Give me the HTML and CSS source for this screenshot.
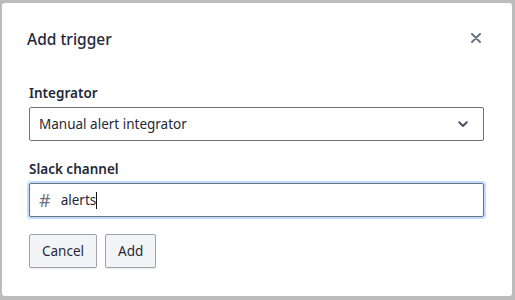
FILE: index.html
```html
<!DOCTYPE html>
<html>
	<head>
		<meta charset="UTF-8">
		<title>Add trigger</title>
		<link rel="stylesheet" href="styles.css">
	</head>
	<body>
		<div class="dialog">
			<div class="dlg-head">
				<h2 class="dlg-title">Add trigger</h2>
				<span class="dlg-close">
					<svg width="10" height="10" viewBox="0 0 10 10"><path d="M1 1L9 9M9 1L1 9" stroke="#6b7489" stroke-width="2" stroke-linecap="round"/></svg>
				</span>
			</div>
			<div class="field">
				<label class="field-label">Integrator</label>
				<div class="select">
					<span>Manual alert integrator</span>
					<svg width="10" height="7" viewBox="0 0 10 7"><path d="M1.2 1.3L5 5L8.8 1.3" fill="none" stroke="#4b5563" stroke-width="2" stroke-linecap="round" stroke-linejoin="round"/></svg>
				</div>
			</div>
			<div class="field">
				<label class="field-label">Slack channel</label>
				<div class="input focus">
					<span class="hash">#</span>
					<span class="val">alerts</span><span class="caret"></span>
				</div>
			</div>
			<div class="actions">
				<button class="btn">Cancel</button>
				<button class="btn">Add</button>
			</div>
		</div>
	</body>
</html>
```

FILE: styles.css
```css
*{margin:0;padding:0;box-sizing:border-box;}
html,body{height:100%;}
body{background:#bcbcbc;font-family:"Noto Sans","Open Sans",sans-serif;color:#1f2937;padding:3px 3px 4px 2px;}
.dialog{background:#fff;height:293px;width:510px;border-radius:3px;padding:0 28px 0 27px;}
.dlg-head{display:flex;align-items:center;justify-content:space-between;height:80px;}
.dlg-title{font-size:15.5px;font-weight:500;color:#1f2a3a;margin-left:-2px;margin-top:-8px;}
.dlg-close{display:flex;margin-right:3px;margin-top:-11px;}
.field{display:flex;flex-direction:column;margin-bottom:18px;}
.field-label{font-size:13.5px;font-weight:600;color:#1f2937;line-height:20px;margin-bottom:4px;}
.select,.input{height:34px;border:1px solid #6b7280;border-radius:2px;display:flex;align-items:center;font-size:13.5px;color:#1f2937;}
.select{justify-content:space-between;padding:0 15px 0 9px;}
.input{padding:0 9px;}
.input.focus{box-shadow:0 0 0 2px #bfdbfe;}
.hash{color:#6b7280;font-size:18px;margin-right:10px;line-height:1;}
.caret{display:inline-block;width:1px;height:17px;background:#111;}
.actions{display:flex;gap:8px;margin-top:-1px;}
.btn{font-family:inherit;font-size:13.5px;color:#1f2937;background:#f3f4f6;border:1px solid #9ca3af;border-radius:2px;height:34px;padding:0 12px;box-shadow:0 1px 1px rgba(0,0,0,.08);}
```
